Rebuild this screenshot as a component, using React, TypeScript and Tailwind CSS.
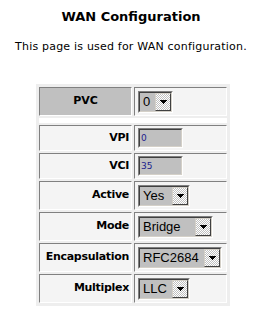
import React from "react";

const Arrow = () => (
  <svg width="7" height="4" viewBox="0 0 7 4" shapeRendering="crispEdges">
    <path d="M0 0h7v1H0zM1 1h5v1H1zM2 2h3v1H2zM3 3h1v1H3z" fill="#000" />
  </svg>
);

const Select = ({ value, width }: { value: string; width: string }) => (
  <div
    className={`flex h-[22px] ${width} border border-t-[#808080] border-l-[#808080] border-b-white border-r-white`}
  >
    <div className="flex flex-1 border border-t-[#404040] border-l-[#404040] border-b-[#d4d0c8] border-r-[#d4d0c8] bg-[#c0c0c0]">
      <span className="flex-1 pl-[3px] text-[13px] leading-[18px] text-black font-['Liberation_Sans',Arial,sans-serif]">
        {value}
      </span>
      <span className="flex w-[16px] items-center justify-center border border-t-[#d4d0c8] border-l-[#d4d0c8] border-b-[#404040] border-r-[#404040] bg-[repeating-conic-gradient(#ffffff_0%_25%,#c0c0c0_0%_50%)] bg-[length:2px_2px]">
        <Arrow />
      </span>
    </div>
  </div>
);

const Field = ({ value }: { value: string }) => (
  <div className="h-[20px] w-[45px] border border-t-[#808080] border-l-[#808080] border-b-white border-r-white">
    <div className="h-full border border-t-[#404040] border-l-[#404040] border-b-[#d4d0c8] border-r-[#d4d0c8] bg-[#c0c0c0] pl-[1px] text-[9px] leading-[16px] text-[#1c1c8c]">
      {value}
    </div>
  </div>
);

const cell =
  "border border-t-[#808080] border-l-[#808080] border-b-white border-r-white";

const Row = ({ label, children, input }: { label: string; children: React.ReactNode; input?: boolean }) => (
  <tr>
    <td className={`${cell} w-[93px] bg-[#f4f4f4] pr-[2px] text-right text-[11px] font-bold tracking-[-0.3px] text-black`}>
      {label}
    </td>
    <td className={`${cell} bg-[#f4f4f4] pl-[3px] ${input ? "py-[2px]" : "pt-[3px] pb-[2px]"}`}>
      {children}
    </td>
  </tr>
);

export default function App() {
  return (
    <div className="h-[325px] w-[266px] bg-white pt-[9px] font-['DejaVu_Sans',Verdana,sans-serif]">
      <h1 className="w-[262px] text-center text-[13px] font-bold leading-[16px] text-black">
        WAN Configuration
      </h1>
      <p className="mt-[15px] w-[262px] text-center text-[11px] leading-[13px] tracking-[0.2px] text-black">
        This page is used for WAN configuration.
      </p>
      <table className="mx-auto mt-[31px] w-[194px] border-separate border-spacing-[2px] border border-[#eeeeee] bg-[#eeeeee]">
        <tbody>
          <tr>
            <td className={`${cell} w-[93px] bg-[#c0c0c0] text-center text-[11px] font-bold text-black`}>
              PVC
            </td>
            <td className={`${cell} bg-[#f4f4f4] pl-[3px] pt-[3px] pb-[2px]`}>
              <Select value="0" width="w-[35px]" />
            </td>
          </tr>
          <tr>
            <td colSpan={2} className="h-[5px] bg-white p-0" />
          </tr>
          <Row label="VPI" input>
            <Field value="0" />
          </Row>
          <Row label="VCI" input>
            <Field value="35" />
          </Row>
          <Row label="Active">
            <Select value="Yes" width="w-[52px]" />
          </Row>
          <Row label="Mode">
            <Select value="Bridge" width="w-[75px]" />
          </Row>
          <Row label="Encapsulation">
            <Select value="RFC2684" width="w-[84px]" />
          </Row>
          <Row label="Multiplex">
            <Select value="LLC" width="w-[52px]" />
          </Row>
        </tbody>
      </table>
    </div>
  );
}
